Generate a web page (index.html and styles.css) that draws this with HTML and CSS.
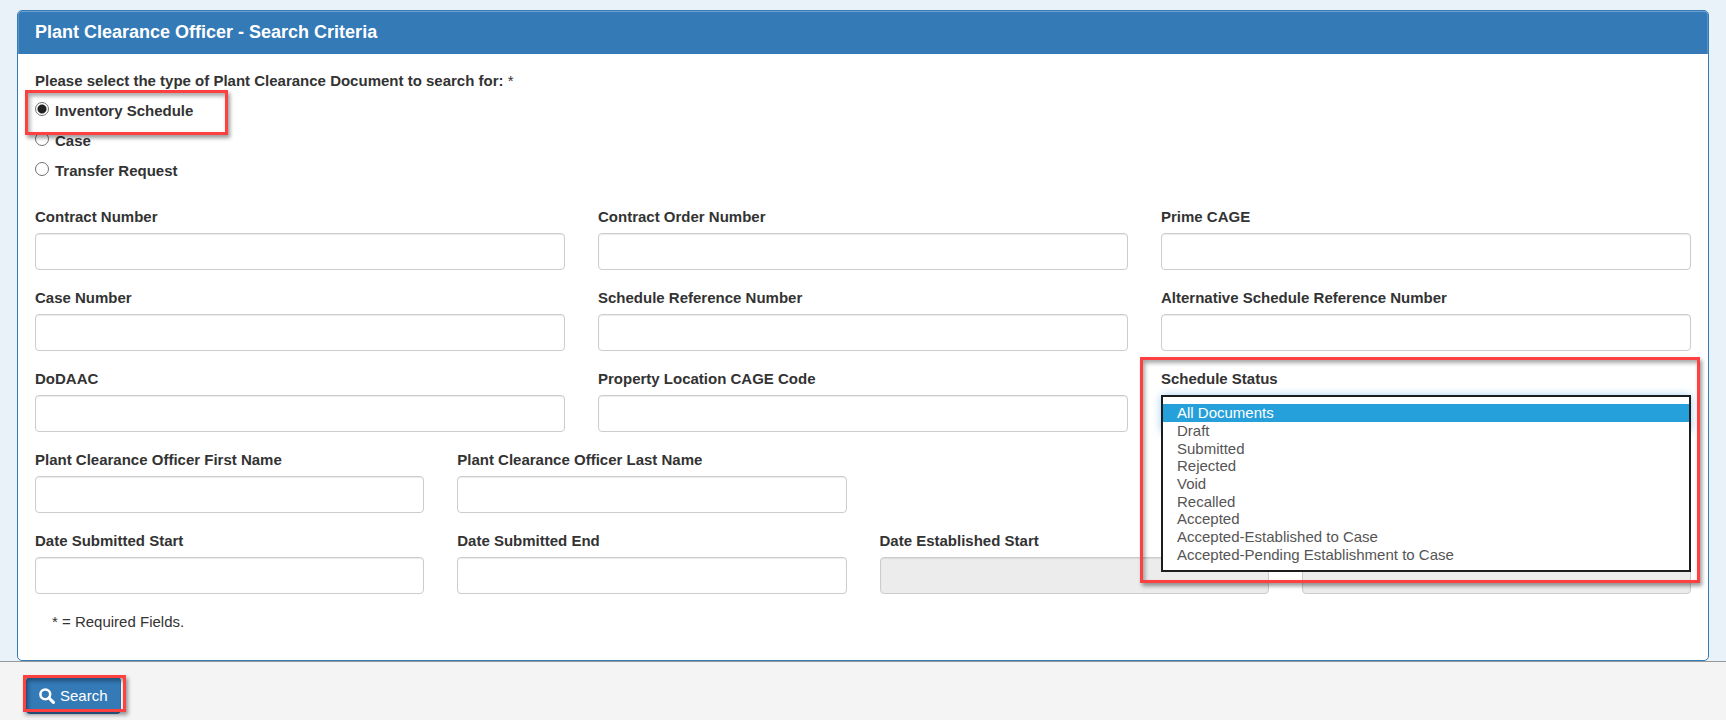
FILE: index.html
```html
<!DOCTYPE html>
<html lang="en">
<head>
<meta charset="utf-8">
<meta name="viewport" content="width=device-width, initial-scale=1">
<title>Plant Clearance Officer - Search Criteria</title>
<link rel="stylesheet" href="styles.css">
</head>
<body>
<form class="page">
  <main class="content">
    <section class="panel">
      <h1 class="panel-heading">Plant Clearance Officer - Search Criteria</h1>
      <div class="panel-body">
        <fieldset class="doc-type">
          <legend class="doc-legend">Please select the type of Plant Clearance Document to search for: <span class="required">*</span></legend>
          <div class="radio-row marked">
            <input class="radio" type="radio" name="docType" id="typeInventory" checked>
            <label for="typeInventory">Inventory Schedule</label>
            <span class="callout callout-radio"></span>
          </div>
          <div class="radio-row">
            <input class="radio" type="radio" name="docType" id="typeCase">
            <label for="typeCase">Case</label>
          </div>
          <div class="radio-row">
            <input class="radio" type="radio" name="docType" id="typeTransfer">
            <label for="typeTransfer">Transfer Request</label>
          </div>
        </fieldset>

        <div class="grid thirds">
          <div class="field"><label for="contract">Contract Number</label><input class="control" type="text" id="contract"></div>
          <div class="field"><label for="order">Contract Order Number</label><input class="control" type="text" id="order"></div>
          <div class="field"><label for="cage">Prime CAGE</label><input class="control" type="text" id="cage"></div>
          <div class="field"><label for="caseNo">Case Number</label><input class="control" type="text" id="caseNo"></div>
          <div class="field"><label for="schedRef">Schedule Reference Number</label><input class="control" type="text" id="schedRef"></div>
          <div class="field"><label for="altRef">Alternative Schedule Reference Number</label><input class="control" type="text" id="altRef"></div>
          <div class="field"><label for="dodaac">DoDAAC</label><input class="control" type="text" id="dodaac"></div>
          <div class="field"><label for="propCage">Property Location CAGE Code</label><input class="control" type="text" id="propCage"></div>
          <div class="field marked">
            <label for="status">Schedule Status</label>
            <div class="dropdown">
              <select class="dropdown-list" id="status" size="9">
                <option selected>All Documents</option>
                <option>Draft</option>
                <option>Submitted</option>
                <option>Rejected</option>
                <option>Void</option>
                <option>Recalled</option>
                <option>Accepted</option>
                <option>Accepted-Established to Case</option>
                <option>Accepted-Pending Establishment to Case</option>
              </select>
            </div>
            <span class="callout callout-status"></span>
          </div>
        </div>

        <div class="grid quarters">
          <div class="field"><label for="first">Plant Clearance Officer First Name</label><input class="control" type="text" id="first"></div>
          <div class="field"><label for="last">Plant Clearance Officer Last Name</label><input class="control" type="text" id="last"></div>
        </div>

        <div class="grid quarters">
          <div class="field"><label for="subStart">Date Submitted Start</label><input class="control" type="text" id="subStart"></div>
          <div class="field"><label for="subEnd">Date Submitted End</label><input class="control" type="text" id="subEnd"></div>
          <div class="field"><label for="estStart">Date Established Start</label><input class="control" type="text" id="estStart" disabled></div>
          <div class="field"><label for="estEnd">Date Established End</label><input class="control" type="text" id="estEnd" disabled></div>
        </div>

        <p class="note">* = Required Fields.</p>
      </div>
    </section>
  </main>

  <footer class="footer">
    <div class="marked">
      <button class="btn" type="button">
        <svg class="btn-icon" viewBox="0 0 16 16" aria-hidden="true">
          <circle cx="6.3" cy="6.3" r="4.9" fill="none" stroke="currentColor" stroke-width="2.5"/>
          <path d="M10 10l4.4 4.4" fill="none" stroke="currentColor" stroke-width="3.1" stroke-linecap="round"/>
        </svg>
        <span>Search</span>
      </button>
      <span class="callout callout-button"></span>
    </div>
  </footer>
</form>
</body>
</html>
```

FILE: styles.css
```css
* { box-sizing: border-box; }

body {
  margin: 0;
  background: #e9f1f9;
  color: #333;
  font: 15px/21px "Liberation Sans", Arial, sans-serif;
}

.page {
  display: flex;
  flex-direction: column;
  min-height: 100vh;
}

.content {
  display: flex;
  flex: 1;
  padding: 10px 17px 0;
}

.panel {
  flex: 1;
  background: #fff;
  border: 1px solid #337ab7;
  border-radius: 5px;
}

.panel-heading {
  margin: 0;
  padding: 11px 17px;
  background: #337ab7;
  box-shadow: inset 0 1px 0 #6ca3d3, inset 1px 0 0 #5b94c8, inset -1px 0 0 #5b94c8;
  border-radius: 4px 4px 0 0;
  color: #fff;
  font-size: 18px;
  line-height: 21px;
}

.panel-body { padding: 16px 17px 0; }

.doc-type {
  margin: 0 0 25px;
  padding: 0;
  border: 0;
  font-weight: bold;
}

.doc-legend { padding: 0; }

.required { font-weight: normal; }

.radio-row {
  display: flex;
  align-items: center;
  gap: 6px;
  margin-top: 9px;
}

.radio {
  appearance: none;
  width: 14px;
  height: 14px;
  margin: 0 0 4px;
  background: #fff;
  border: 1px solid #707070;
  border-radius: 50%;
}

.radio:checked { background: radial-gradient(circle, #222 4px, #fff 5px); }

.marked { position: relative; }

.grid {
  display: grid;
  gap: 17px 33px;
  margin-bottom: 17px;
}

.thirds { grid-template-columns: repeat(3, 1fr); }
.quarters { grid-template-columns: repeat(4, 1fr); }

.field {
  display: flex;
  flex-direction: column;
  gap: 6px;
  min-width: 0;
}

.field label { font-weight: bold; }

.control {
  width: 100%;
  height: 37px;
  padding: 6px 12px;
  background: #fff;
  border: 1px solid #ccc;
  border-radius: 4px;
  box-shadow: inset 0 1px 1px rgba(0, 0, 0, .08);
  font: inherit;
}

.control:disabled { background: #ececec; }

.dropdown {
  position: relative;
  height: 37px;
  border-radius: 4px;
  box-shadow: 0 0 8px rgba(102, 175, 233, .6);
}

.dropdown-list {
  position: absolute;
  z-index: 1;
  top: 0;
  left: 0;
  width: 100%;
  height: 177px;
  padding: 7px 0;
  overflow: hidden;
  background: #fff;
  border: 2px solid #1c1c1c;
  border-radius: 0;
  outline: 0;
  color: #555;
  font: inherit;
}

.dropdown-list option {
  height: 18px;
  min-height: 0;
  padding: 0 14px;
  line-height: 18px;
}

.dropdown-list option:nth-child(3n) { height: 17px; }

.dropdown-list option:checked {
  background: linear-gradient(#26a0da, #26a0da);
  color: #fff;
}

.callout {
  position: absolute;
  z-index: 2;
  border: 3px solid #ff4040;
  box-shadow: 2px 3px 4px rgba(0, 0, 0, .4), inset 2px 3px 4px rgba(0, 0, 0, .35);
  pointer-events: none;
}

.callout-radio { top: -10px; left: -10px; width: 203px; height: 45px; }
.callout-status { top: -11px; left: -21px; right: -9px; height: 226px; }
.callout-button { top: -2px; left: -3px; right: -5px; bottom: 2px; }

.note {
  margin: 0;
  padding: 0 17px 23px;
}

.footer {
  display: flex;
  padding: 15px 26px 6px;
  background: #f4f4f4;
  border-top: 1px solid #999;
}

.btn {
  display: flex;
  align-items: center;
  gap: 5px;
  height: 37px;
  padding: 0 12px;
  background: #337ab7;
  border: 1px solid #2e6da4;
  border-radius: 4px;
  color: #fff;
  font: inherit;
}

.btn-icon {
  width: 16px;
  height: 16px;
}
```
